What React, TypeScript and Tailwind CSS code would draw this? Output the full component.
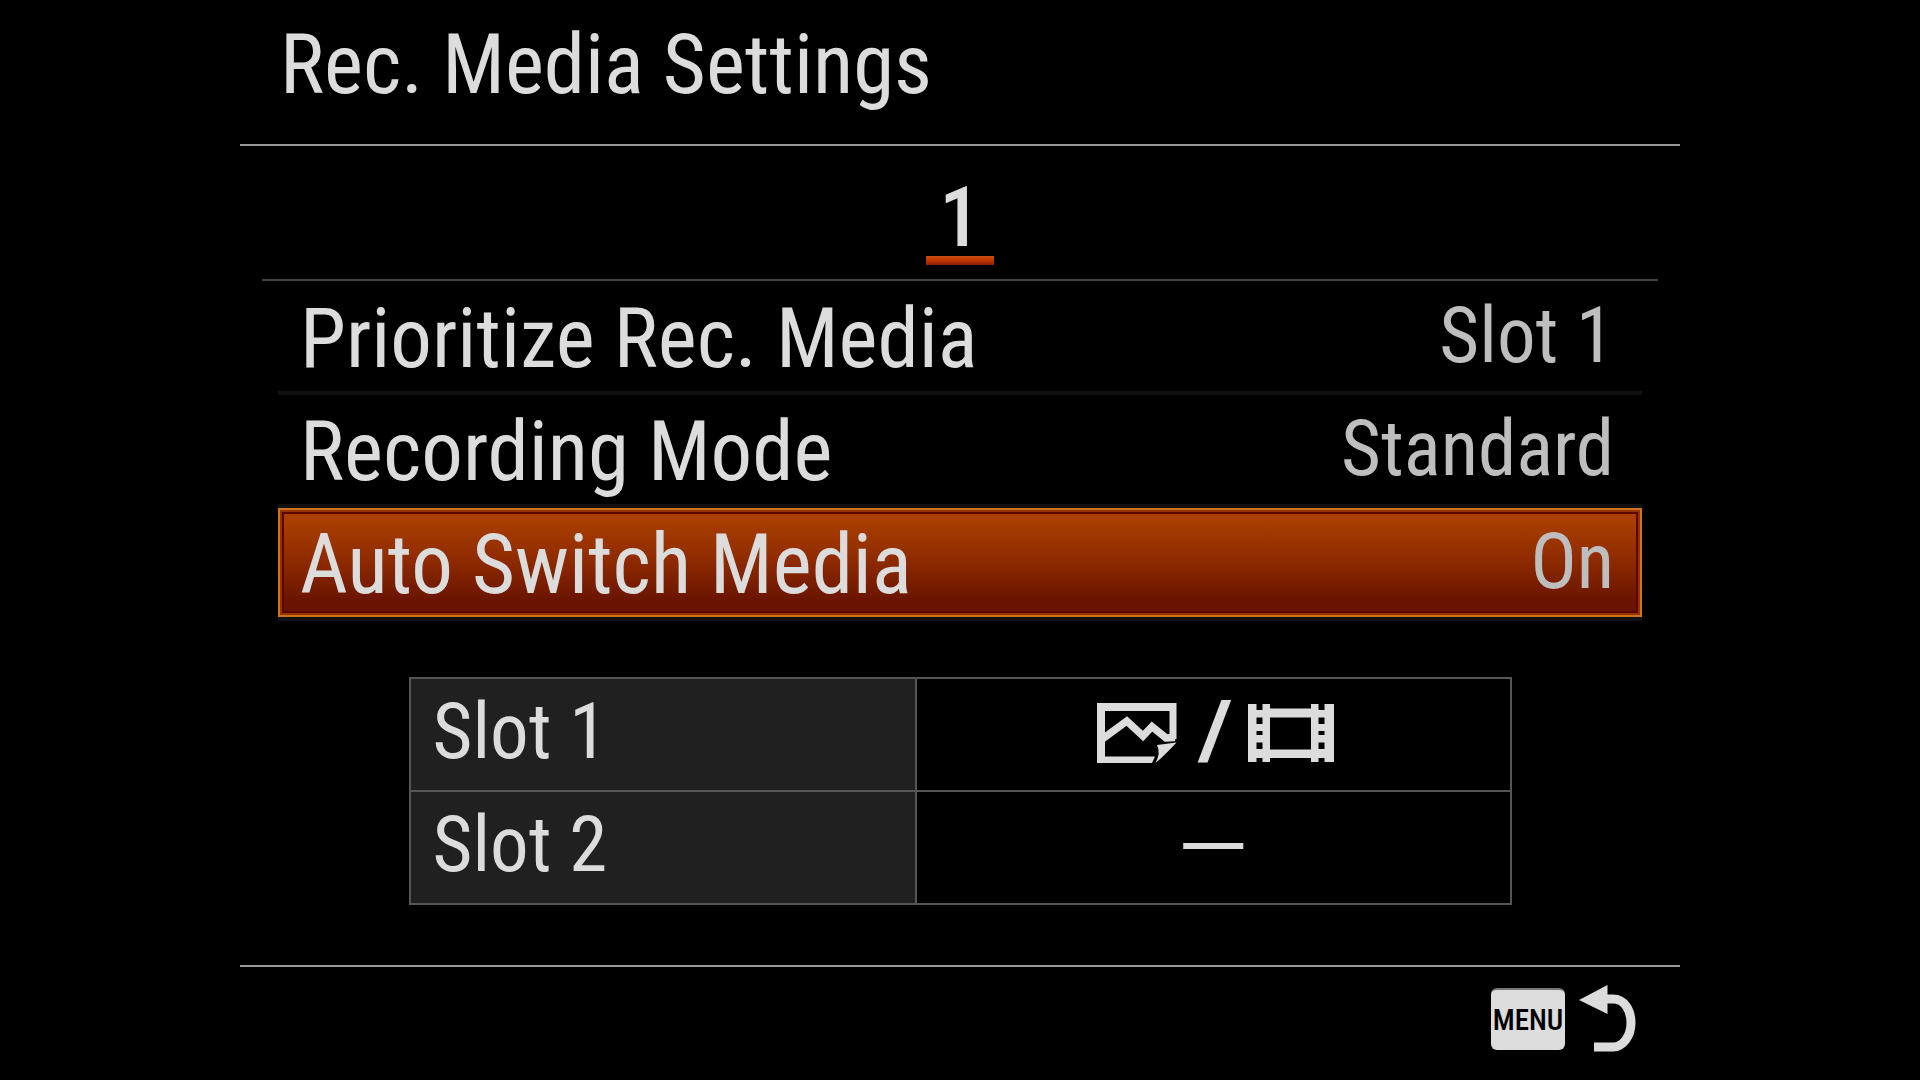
import React, { useState } from "react";
import clsx from "clsx";

const settings = [
  { id: "priority", label: "Prioritize Rec. Media", value: "Slot 1" },
  { id: "mode", label: "Recording Mode", value: "Standard" },
  { id: "autoSwitch", label: "Auto Switch Media", value: "On" },
];

const PhotoIcon = () => (
  <svg viewBox="0 0 80 60" className="w-20 h-[60px]" fill="none" role="img" aria-label="Photo">
    <path d="M0 0H79.5V36L72.5 37V8H8V53.5H58L55 60H0Z" fill="currentColor" />
    <path
      d="M4 37L29.8 18L46 33L55 23.5L69 35L78 34.5"
      stroke="currentColor"
      strokeWidth="7.5"
    />
    <path d="M79.5 39.5L60 42Q64 50 58.5 60Q66 54 79.5 39.5Z" fill="currentColor" />
  </svg>
);

const FilmIcon = () => (
  <svg viewBox="0 0 86 58" className="w-[86px] h-[58px]" role="img" aria-label="Movie">
    <path
      fill="currentColor"
      fillRule="evenodd"
      d="M0 0H8.5V6H14.5V0H22V4.5H63V0H70.5V6H76.5V0H86V58H76.5V54H70.5V58H63V54H22V58H14.5V54H8.5V58H0Z
        M8.5 13.5V20H14.5V13.5Z M8.5 27V31H14.5V27Z M8.5 38.5V45H14.5V38.5Z
        M70.5 13.5V20H76.5V13.5Z M70.5 27V31H76.5V27Z M70.5 38.5V45H76.5V38.5Z
        M22 13.5V45.5H63V13.5Z"
    />
  </svg>
);

const ReturnIcon = () => (
  <svg viewBox="0 0 57 68" className="w-[57px] h-[68px]" fill="none" aria-hidden="true">
    <path d="M0 15L28.5 0V29Z" fill="currentColor" />
    <path
      d="M28 14H34C46 14 52 26 52 38C52 51 44 62 34 62H15"
      stroke="currentColor"
      strokeWidth="9"
    />
  </svg>
);

const App = () => {
  const [selected, setSelected] = useState("autoSwitch");

  return (
    <div className="min-h-screen bg-black text-[#dcdcdc] font-['Roboto_Condensed',Roboto,sans-serif]">
      <div className="w-3/4 mx-auto">
        <header className="flex items-center h-[146px] pl-10 pb-4 border-b-2 border-[#999999]">
          <h1 className="text-[83px] leading-none whitespace-nowrap">Rec. Media Settings</h1>
        </header>

        <main>
          <nav className="flex justify-center items-end h-[135px] mx-[22px] pb-3.5 border-b-2 border-[#444444]">
            <button className="flex flex-col items-center w-[68px]">
              <span className="text-[83px] leading-[76px] font-medium">1</span>
              <span className="w-full h-[9px] bg-linear-to-b from-[#c8500f] via-[#c03400] to-[#8c1c08]" />
            </button>
          </nav>

          <ul className="mx-[38px] pt-px">
            {settings.map((item) => (
              <li key={item.id} className="h-[113px] border-b-4 border-[#121010]">
                <button
                  onClick={() => setSelected(item.id)}
                  className={clsx(
                    "flex items-center justify-between w-full h-full pl-[22px] pr-7 whitespace-nowrap",
                    selected === item.id &&
                      "bg-linear-to-b from-[#aa3f00] from-10% via-[#8c2900] via-50% to-[#6a1400] to-85% shadow-[inset_0_0_0_2px_#cc7616,inset_0_0_0_4px_#963200,inset_0_0_0_6px_#5c0600]"
                  )}
                >
                  <span className="pt-1 text-[83px] leading-none">{item.label}</span>
                  <span className="text-[77px] leading-none text-[#bebebe]">{item.value}</span>
                </button>
              </li>
            ))}
          </ul>

          <table className="w-[1103px] max-w-full mx-auto mt-14 table-fixed border-collapse">
            <tbody>
              <tr className="h-[113px]">
                <th
                  scope="row"
                  className="w-[46%] pl-[22px] pb-1 bg-[#202020] border-2 border-[#555555] text-left text-[77px] leading-none font-normal"
                >
                  Slot 1
                </th>
                <td className="p-0 pb-1 border-2 border-[#555555]">
                  <div className="flex items-center justify-center gap-6 pl-1">
                    <PhotoIcon />
                    <span className="font-['Liberation_Sans',sans-serif] italic font-bold text-[83px] leading-none">
                      /
                    </span>
                    <FilmIcon />
                  </div>
                </td>
              </tr>
              <tr className="h-[113px]">
                <th
                  scope="row"
                  className="pl-[22px] pb-1 bg-[#202020] border-2 border-[#555555] text-left text-[77px] leading-none font-normal"
                >
                  Slot 2
                </th>
                <td className="p-0 pb-3 border-2 border-[#555555] text-center font-['Liberation_Sans',sans-serif] text-[60px] leading-none font-bold">
                  —
                </td>
              </tr>
            </tbody>
          </table>
        </main>

        <footer className="flex justify-end mt-15 pt-[18px] pr-11 border-t-2 border-[#999999]">
          <button className="flex items-center gap-3.5">
            <kbd className="flex items-center justify-center w-[74px] h-[62px] rounded-md border-t-2 border-[#777777] bg-[#dcdcdc] text-black text-[29px] leading-none font-medium font-['Roboto_Condensed',Roboto,sans-serif]">
              MENU
            </kbd>
            <ReturnIcon />
          </button>
        </footer>
      </div>
    </div>
  );
};

export default App;
